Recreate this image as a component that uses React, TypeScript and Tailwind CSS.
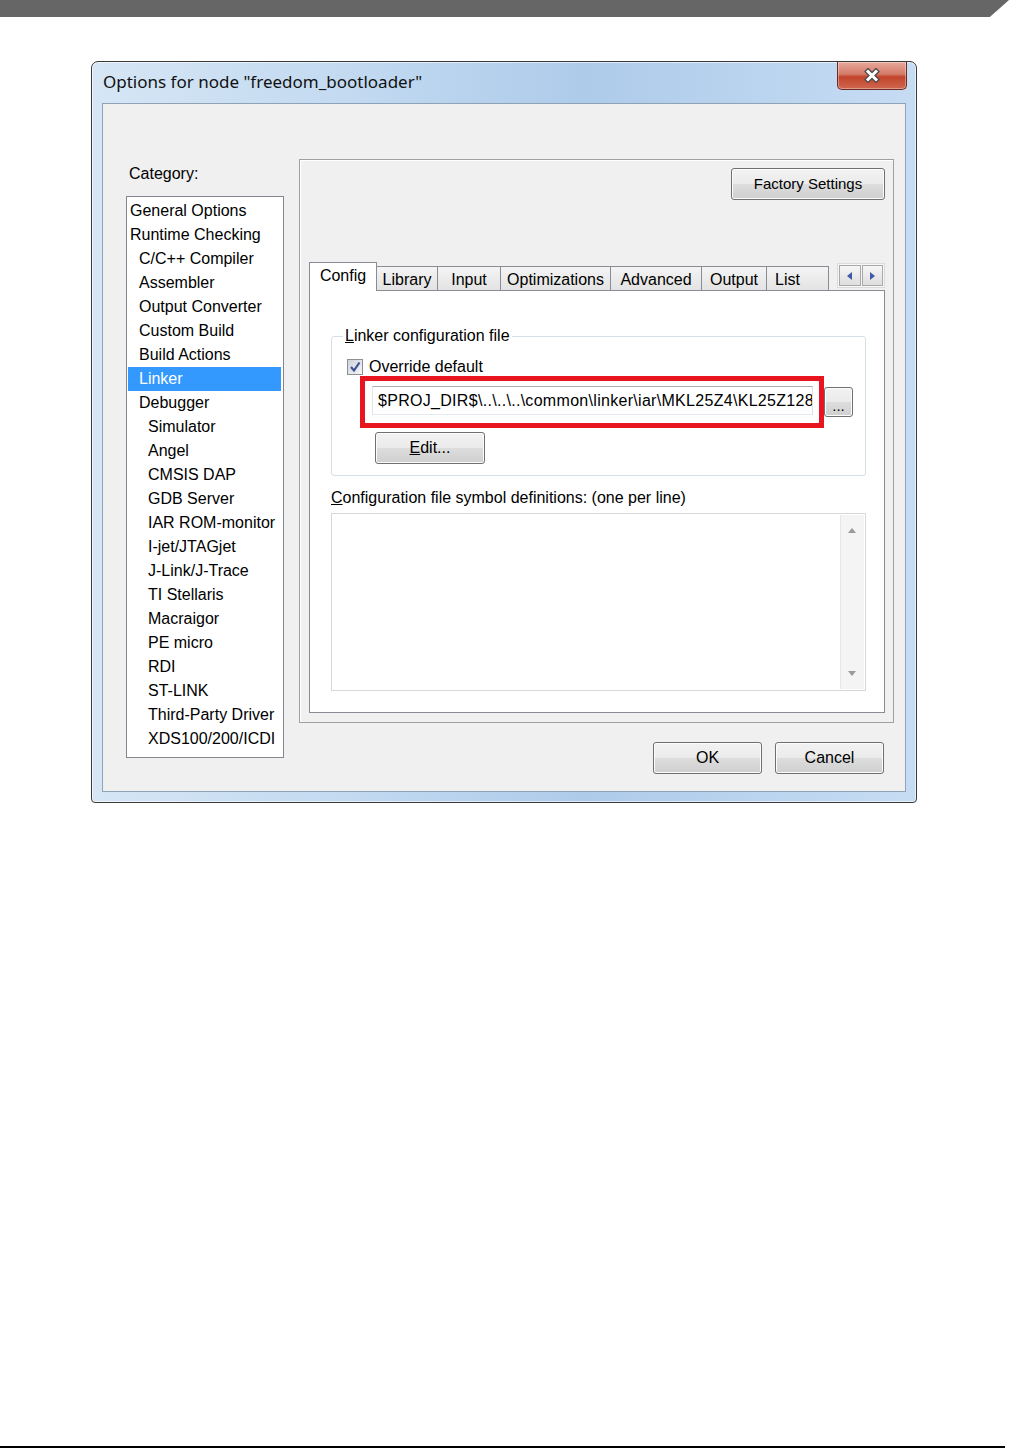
import React from "react";

const categories: { label: string; level: number; selected?: boolean }[] = [
  { label: "General Options", level: 0 },
  { label: "Runtime Checking", level: 0 },
  { label: "C/C++ Compiler", level: 1 },
  { label: "Assembler", level: 1 },
  { label: "Output Converter", level: 1 },
  { label: "Custom Build", level: 1 },
  { label: "Build Actions", level: 1 },
  { label: "Linker", level: 1, selected: true },
  { label: "Debugger", level: 1 },
  { label: "Simulator", level: 2 },
  { label: "Angel", level: 2 },
  { label: "CMSIS DAP", level: 2 },
  { label: "GDB Server", level: 2 },
  { label: "IAR ROM-monitor", level: 2 },
  { label: "I-jet/JTAGjet", level: 2 },
  { label: "J-Link/J-Trace", level: 2 },
  { label: "TI Stellaris", level: 2 },
  { label: "Macraigor", level: 2 },
  { label: "PE micro", level: 2 },
  { label: "RDI", level: 2 },
  { label: "ST-LINK", level: 2 },
  { label: "Third-Party Driver", level: 2 },
  { label: "XDS100/200/ICDI", level: 2 },
];

const tabs = [
  { label: "Library", w: "w-[62px]" },
  { label: "Input", w: "w-[64px]" },
  { label: "Optimizations", w: "w-[111px]" },
  { label: "Advanced", w: "w-[92px]" },
  { label: "Output", w: "w-[66px]" },
];

const levelPad = ["pl-[2px]", "pl-[11px]", "pl-[20px]"];

const btn =
  "flex items-center justify-center rounded-[3px] border border-[#707070] bg-[linear-gradient(to_bottom,#f2f2f2_0%,#ebebeb_50%,#dddddd_51%,#cfcfcf_100%)] shadow-[inset_0_0_0_1px_#fcfcfc] text-[15px] text-black";

function CloseButton() {
  return (
    <div className="flex h-[28px] w-[70px] items-center justify-center rounded-b-[5px] border border-t-0 border-[#6b2a22] bg-[linear-gradient(to_bottom,#e8a99b_0%,#d47a68_45%,#c2432c_55%,#d0674f_100%)] shadow-[inset_0_0_0_1px_rgba(255,255,255,0.35)]">
      <svg width="18" height="15" viewBox="0 0 18 15">
        <path d="M5 3.5 L13 11.5 M13 3.5 L5 11.5" stroke="#4a4a4a" strokeWidth="5.5" strokeLinecap="square" />
        <path d="M5 3.5 L13 11.5 M13 3.5 L5 11.5" stroke="#ffffff" strokeWidth="3" strokeLinecap="square" />
      </svg>
    </div>
  );
}

function Checkbox() {
  return (
    <div className="flex h-[16px] w-[16px] items-center justify-center border border-[#8e8f8f] bg-[linear-gradient(135deg,#cfd3da,#f4f5f7)]">
      <svg width="12" height="12" viewBox="0 0 12 12">
        <path d="M2 6 L5 9.5 L10.5 1.5" fill="none" stroke="#3d5294" strokeWidth="2.2" />
      </svg>
    </div>
  );
}

function Arrow({ dir, color }: { dir: "up" | "down" | "left" | "right"; color: string }) {
  const d = {
    up: "M0 5 L4 0 L8 5 Z",
    down: "M0 0 L8 0 L4 5 Z",
    left: "M5 0 L5 8 L0 4 Z",
    right: "M0 0 L5 4 L0 8 Z",
  }[dir];
  const vertical = dir === "up" || dir === "down";
  return (
    <svg width={vertical ? 8 : 5} height={vertical ? 5 : 8} viewBox={vertical ? "0 0 8 5" : "0 0 5 8"}>
      <path d={d} fill={color} />
    </svg>
  );
}

export default function App() {
  return (
    <div className="flex h-[1449px] w-[1009px] flex-col bg-white font-['Liberation_Sans',Arial,sans-serif] text-black">
      <div className="h-[17px] w-full bg-[#666666] [clip-path:polygon(0_0,100%_0,98.1%_100%,0_100%)]" />

      {/* dialog window */}
      <div className="ml-[91px] mt-[44px] flex h-[742px] w-[826px] flex-col overflow-hidden rounded-t-[7px] rounded-b-[4px] border border-[#3a3a3a] bg-[linear-gradient(to_right,#d6e6f5_0%,#c0d8f0_35%,#aecbea_60%,#c6dcf3_100%)] shadow-[inset_0_0_0_1px_rgba(255,255,255,0.6)]">
        <div className="flex h-[41px] items-start justify-between pl-[11px] pr-[9px]">
          <span className="mt-[8px] font-['Noto_Sans',sans-serif] text-[17px] leading-[24px] text-[#111]">
            Options for node "freedom_bootloader"
          </span>
          <CloseButton />
        </div>

        <div className="mx-[10px] mb-[10px] flex flex-1 items-start border border-[#8fa3b8] bg-[#f0f0f0] pt-[55px] text-[16px]">
          {/* category column */}
          <div className="flex w-[181px] flex-col pl-[23px]">
            <div className="ml-[3px] mt-[5px] h-[20px] leading-[20px]">Category:</div>
            <div className="mt-[12px] flex h-[562px] w-[158px] flex-col border border-[#828790] bg-white px-[1px] pt-[2px]">
              {categories.map((c) => (
                <div
                  key={c.label}
                  className={`h-[24px] whitespace-nowrap leading-[24px] ${levelPad[c.level]} ${
                    c.selected ? "mr-[1px] bg-[#3399ff] text-white" : ""
                  }`}
                >
                  {c.label}
                </div>
              ))}
            </div>
          </div>

          {/* options column */}
          <div className="ml-[15px] flex flex-col">
            <div className="flex h-[564px] w-[595px] flex-col border border-[#a0a0a0] pb-[9px] pl-[9px] pr-[8px] pt-[8px] shadow-[inset_1px_1px_0_#ffffff]">
              <div className="flex justify-end">
                <div className={`${btn} h-[32px] w-[154px]`}>Factory Settings</div>
              </div>

              <div className="mt-[62px] flex h-[28px] items-end">
                <div className="relative z-10 -mb-[1px] flex h-[29px] w-[68px] items-start justify-center border border-b-0 border-[#898c95] bg-white pt-[3px] leading-[20px]">
                  Config
                </div>
                {tabs.map((t) => (
                  <div
                    key={t.label}
                    className={`flex h-[24px] ${t.w} -ml-px items-center justify-center border border-b-0 border-[#898c95] bg-[linear-gradient(to_bottom,#f4f4f4,#e3e3e3)] pt-[2px] leading-[20px] first:ml-0`}
                  >
                    {t.label}
                  </div>
                ))}
                <div className="-ml-px flex h-[24px] w-[63px] items-center border border-b-0 border-[#898c95] bg-[linear-gradient(to_bottom,#f4f4f4,#e3e3e3)] pl-[8px] pt-[2px] leading-[20px]">
                  List
                </div>
                <div className="mb-[2px] ml-auto flex h-[25px] w-[48px] gap-px border border-[#dcdcdc] bg-[#f7f7f7] p-px">
                  <div className="flex flex-1 items-center justify-center border border-[#a9a9a9] bg-[linear-gradient(to_bottom,#f6f6f6,#dedede)]">
                    <Arrow dir="left" color="#4058a8" />
                  </div>
                  <div className="flex flex-1 items-center justify-center border border-[#a9a9a9] bg-[linear-gradient(to_bottom,#f6f6f6,#dedede)]">
                    <Arrow dir="right" color="#4058a8" />
                  </div>
                </div>
              </div>

              {/* tab page */}
              <div className="relative flex h-[423px] flex-col border border-[#898c95] bg-white pl-[21px] pr-[18px]">
                <fieldset className="mt-[35px] flex flex-col rounded-[3px] border border-[#d5dfe5] pb-[11px]">
                  <legend className="ml-[11px] px-[2px] leading-[20px]">
                    <span className="underline">L</span>inker configuration file
                  </legend>
                  <div className="mt-[11px] flex h-[20px] items-center gap-[6px] pl-[15px]">
                    <Checkbox />
                    <span className="leading-[20px]">Override default</span>
                  </div>
                  <div className="mt-[9px] flex items-start pl-[40px]">
                    <div className="flex h-[29px] w-[441px] items-center overflow-hidden whitespace-nowrap border border-[#abadb3] border-b-[#e3e9ef] border-l-[#e2e3ea] border-r-[#dbdfe6] pl-[5px] tracking-[0.3px]">
                      $PROJ_DIR$\..\..\..\common\linker\iar\MKL25Z4\KL25Z128_flash.icf
                    </div>
                    <div className={`${btn} ml-[11px] mt-[1px] h-[30px] w-[29px] items-end pb-[4px] text-[12px] leading-[12px]`}>
                      ...
                    </div>
                  </div>
                  <div className={`${btn} ml-[43px] mt-[15px] h-[32px] w-[110px] text-[16px]`}>
                    <span>
                      <span className="underline">E</span>dit...
                    </span>
                  </div>
                </fieldset>

                <div className="mt-[12px] h-[20px] leading-[20px]">
                  <span className="underline">C</span>onfiguration file symbol definitions: (one per line)
                </div>
                <div className="mt-[5px] flex h-[178px] justify-end border border-[#d5d9de] bg-white p-px">
                  <div className="flex w-[24px] flex-col items-center justify-between bg-[#f4f4f4] py-[13px] shadow-[inset_1px_0_0_#e6e6e6]">
                    <Arrow dir="up" color="#9a9a9a" />
                    <Arrow dir="down" color="#9a9a9a" />
                  </div>
                </div>

                {/* highlight annotation */}
                <div className="pointer-events-none absolute left-[50px] top-[85px] h-[52px] w-[464px] border-[5px] border-[#e8151f]" />
              </div>
            </div>

            <div className="mt-[19px] flex justify-end gap-[13px] pr-[10px]">
              <div className={`${btn} h-[32px] w-[109px] border-[#3c7fb1] text-[16px] shadow-[inset_0_0_0_1px_#6fc6f2]`}>OK</div>
              <div className={`${btn} h-[32px] w-[109px] text-[16px]`}>Cancel</div>
            </div>
          </div>
        </div>
      </div>

      <div className="mb-[1px] mt-auto h-[2px] w-[1005px] bg-black" />
    </div>
  );
}
